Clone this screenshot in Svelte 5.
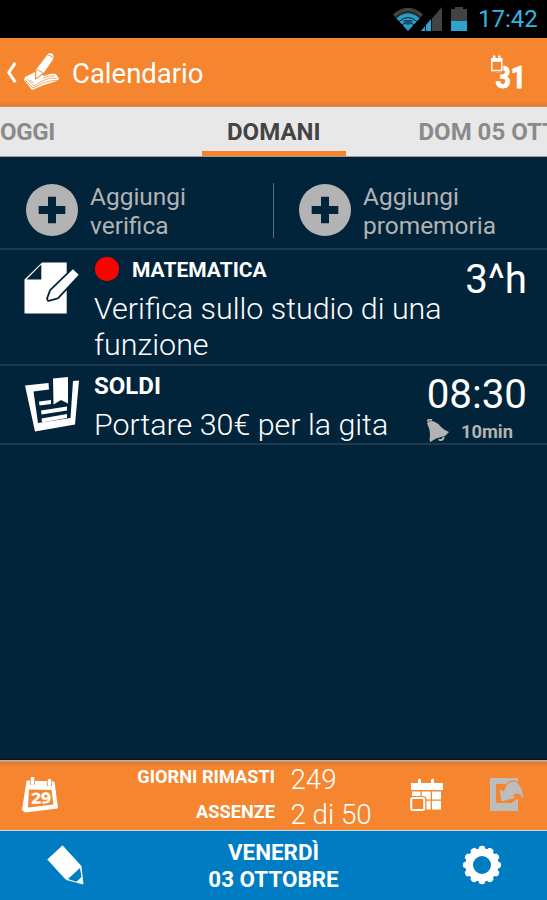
<script>
  const tabs = [
    { label: 'OGGI', cls: 'left' },
    { label: 'DOMANI', cls: 'active' },
    { label: 'DOM 05 OTT', cls: 'right' }
  ];
  const actions = [
    ['Aggiungi', 'verifica'],
    ['Aggiungi', 'promemoria']
  ];
  const teeth = Array.from({ length: 12 }, (_, i) => i * 30);
</script>

<div class="screen">
  <div class="status">
    <svg class="wifi" width="32" height="25" viewBox="0 0 32 25">
      <path d="M1 7.500Q16-6 31 7.500L16 24Z" fill="#434343" />
      <path d="M4.500 11.500Q16 1.500 27.500 11.500L16 24Z" fill="#2c9bc5" />
      <g fill="none" stroke="#071923" stroke-width="1">
        <path d="M3.500 10.500Q16-1 28.500 10.500M7 14.500Q16 6.500 25 14.500M10 18Q16 12.500 22 18" />
      </g>
      <path d="M11 13h10l-3 4.500h-4z" fill="#14506c" />
    </svg>
    <svg class="signal" width="21" height="24" viewBox="0 0 21 24">
      <path d="M21 0V24H0Z" fill="#434343" />
      <path d="M10 12V24H0Z" fill="#2fa3cf" />
      <path d="M4.500 16V24M10.500 10V24" stroke="#041018" stroke-width="1" />
    </svg>
    <svg class="battery" width="16" height="24" viewBox="0 0 16 24">
      <path d="M0 2h4V0h8v2h4v12H0z" fill="#434343" />
      <path d="M0 14h16v10H0z" fill="#2fa3cf" />
    </svg>
    <span class="clock">17:42</span>
  </div>

  <header class="topbar">
    <svg class="back" width="11" height="21" viewBox="0 0 11 21">
      <path d="M9.300 .8L2.800 10.500L9.300 20.200" fill="none" stroke="#fff" stroke-width="3" />
    </svg>
    <svg class="diary" width="36" height="38" viewBox="0 0 36 38" overflow="visible">
      <path d="M1 23L13 17L20 22Q26 19 32 20L35 25L33 27L20 31L8 36L0 26Z" fill="#fff" />
      <path d="M3 24.500L10 32L19 26.500Q26 23 33 24.500M1.500 26.500L9 34L19 29Q27 26 34 26.500M6 26l4 3M19 24Q24 21.500 31 22" fill="none" stroke="#f5862f" stroke-width=".7" />
      <path d="M22 2.500Q24-2 28-.5Q30.500 1 29.300 5L20 18.500L12 24L12.500 15Z" fill="#fff" stroke="#f5862f" stroke-width="2" paint-order="stroke" />
      <path d="M23.300 .8Q27 1.500 29.700 4M13 15.500L19 19" fill="none" stroke="#f5862f" stroke-width=".9" />
    </svg>
    <h1>Calendario</h1>
    <svg class="month" width="38" height="36" viewBox="0 0 38 36">
      <text class="num" x="4.500" y="32.500" textLength="30.500" lengthAdjust="spacingAndGlyphs">31</text>
      <path d="M0 3.500h11.500v13H0z" fill="#f5862f" stroke="#f5862f" stroke-width="1.600" />
      <path d="M0 3h2V.5h2.300V3h3V.5H9.500V3h2v13.300H0z" fill="#fff" />
      <path d="M1.500 6.800h8.500v8H1.500z" fill="#f5862f" />
    </svg>
  </header>

  <nav>
    {#each tabs as tab}
      <div class="tab {tab.cls}"><span>{tab.label}</span></div>
    {/each}
  </nav>

  <section class="actions">
    {#each actions as lines}
      <div class="action">
        <svg width="52" height="52" viewBox="0 0 52 52">
          <circle cx="26" cy="26" r="26" fill="#b3b3b3" />
          <path d="M22 12.700h8v9.300h9.300v8H30v9.300h-8V30h-9.300v-8H22z" fill="#02243b" />
        </svg>
        <p>{lines[0]}<br />{lines[1]}</p>
      </div>
    {/each}
  </section>

  <article class="item test">
    <svg class="picto" width="56" height="53" viewBox="0 0 56 53">
      <path d="M18 .5H42.700V51.500H.5V17.500Z" fill="#fff" />
      <path d="M17.300 2.500V17.500H2.500Z" fill="#02243b" />
      <path d="M49 7.300L54.700 12.700L33.500 35.500L24.500 38L24 36.500L27 28.500Z" fill="#fff" stroke="#02243b" stroke-width="3.600" paint-order="stroke" stroke-linejoin="round" />
    </svg>
    <div class="body">
      <h2><i class="dot"></i>MATEMATICA</h2>
      <p>Verifica sullo studio di una<br />funzione</p>
    </div>
    <div class="when"><strong>3^h</strong></div>
  </article>

  <article class="item memo">
    <svg class="picto" width="56" height="55" viewBox="0 0 56 55">
      <path d="M1 8.500L24.500 6L25 12.500L9.500 14.500L14 46L46.500 41L49 4L55 3.500L51 47.500L11 54.500Z" fill="#fff" />
      <path d="M29 1.500L44 0V26.500L37 23L29.500 27.500Z" fill="#fff" />
      <path d="M15 24.500L27 23V27L15.500 28.500ZM17 33.500L43 29.500V33.500L17.500 37.500ZM17.500 41.500L43 37V41L18 45.500Z" fill="#fff" />
    </svg>
    <div class="body">
      <h2>SOLDI</h2>
      <p>Portare 30€ per la gita</p>
    </div>
    <div class="when">
      <strong>08:30</strong>
      <small>
        <svg width="23" height="24" viewBox="0 0 23 24">
          <path d="M0 4Q3 1 7 2.500Q11 4 14 8Q17 11 22 13L18 17Q8 19 3.500 23Q2 22 3 17Q3 10 1 7Z" fill="#b3b3b3" />
          <path d="M.5 2.500Q2-.5 5 1M11.500 20.500Q15 22.500 17 18" fill="none" stroke="#b3b3b3" stroke-width="2" />
        </svg>
        <span>10min</span>
      </small>
    </div>
  </article>

  <div class="space"></div>

  <section class="stats">
    <svg class="day" width="36" height="36" viewBox="0 0 36 36">
      <path d="M5 4L32 5L35.500 31L3 35L.5 33Z" fill="#fff" stroke="#fff" stroke-width="1" stroke-linejoin="round" />
      <path d="M7 12.500L29.500 13L31.500 27.500L6 30.500Z" fill="#f5862f" />
      <path d="M8 0h5v7.500H8zM25 2h5v7h-5z" fill="#f5862f" />
      <path d="M10.500 1.500V6M27.500 3.500V7.500" stroke="#fff" stroke-width="3.600" stroke-linecap="round" />
      <text class="daynum" x="9" y="26.500" transform="rotate(-2 18 20)" textLength="20" lengthAdjust="spacingAndGlyphs">29</text>
    </svg>
    <div class="labels"><span>GIORNI RIMASTI</span><span>ASSENZE</span></div>
    <div class="values"><span>249</span><span>2 di 50</span></div>
    <svg class="grid" width="34" height="34" viewBox="0 0 34 34">
      <path d="M1 5H8V2Q9.500-1 11 2V5H21V2Q22.500-1 24 2V5H33V12H1Z" fill="#fff" />
      <path d="M2 13.500h8.500v5H2zM11.700 13.500h9v8h-9zM22 13.500h9v8h-9zM12 22.700h8.700v8.700H12zM22 22.700h9v8.700h-9z" fill="#fff" />
      <rect x="1.500" y="20" width="13" height="12" rx="1.500" fill="#f5862f" stroke="#f5862f" stroke-width="4" />
      <rect x="1.200" y="20" width="13" height="12" rx="1.500" fill="#f5862f" stroke="#fff" stroke-width="2" />
    </svg>
    <svg class="export" width="34" height="33" viewBox="0 0 34 33">
      <path d="M0 0H28V6H6V25H22L28 20V33H0Z" fill="#bdbdbd" />
      <path d="M11.500 23.500L9.500 11.500L14 13.500Q17 3.500 23.500 3.500Q32 4.500 33.300 21Q28 11.500 22.500 17.500L25.500 19.500Z" fill="#bdbdbd" stroke="#f5862f" stroke-width="2.400" paint-order="stroke" />
    </svg>
  </section>

  <footer>
    <svg class="pencil" width="38" height="41" viewBox="0 0 38 41">
      <path d="M15.500 .8L34 21L36 39L19 34.500L.7 14.500Z" fill="#fff" stroke="#fff" stroke-width=".8" stroke-linejoin="round" />
      <path d="M33 23L34.500 32L29.500 36.800L21 34Z" fill="#007cc3" />
    </svg>
    <p>VENERDÌ<br />03 OTTOBRE</p>
    <svg class="gear" width="40" height="40" viewBox="-20 -20 40 40">
      <circle r="12.800" fill="none" stroke="#fff" stroke-width="7.600" />
      {#each teeth as a}
        <path transform="rotate({a})" d="M-3.800-15L-2.600-18.500Q0-20 2.600-18.500L3.800-15Z" fill="#fff" />
      {/each}
    </svg>
  </footer>
</div>

<style>
  :global(body) { background: #02243b; }
  .screen {
    width: 547px; height: 900px; overflow: hidden; display: flex; flex-direction: column;
    background: #02243b; color: #fff; font-family: Roboto, sans-serif;
  }
  svg { display: block; flex: none; }
  h1, h2, p { margin: 0; font-weight: 400; }
  .status { height: 38px; flex: none; background: #000; display: flex; align-items: flex-start; padding-top: 7px; box-sizing: border-box; }
  .wifi { margin-left: 392px; }
  .signal { margin-left: -3px; }
  .battery { margin-left: 9px; }
  .clock { margin-left: 11px; font-size: 24px; line-height: 25px; color: #33b5e5; white-space: nowrap; }
  .topbar {
    height: 69px; flex: none; box-sizing: border-box; display: flex; align-items: center;
    background: linear-gradient(#f5862f 63px, #dd7a32 68px, #d6a079 69px);
  }
  .back { margin-left: 6px; }
  .diary { margin-left: 7px; }
  h1 { margin-left: 12px; padding-top: 3px; font-size: 27.500px; line-height: 34px; width: 418px; }
  .month { margin-top: 1px; margin-left: .5px; }
  .num { font: 700 32px Roboto, sans-serif; fill: #fff; stroke: #fff; stroke-width: 1px; stroke-linejoin: round; }
  nav {
    height: 50px; flex: none; box-sizing: border-box; display: grid; grid-template-columns: 202px 143.500px 201.500px;
    background: #e8e8e8; border-bottom: 1px solid #9b9a97; font-size: 24px; font-weight: 700; color: #8a8a8a;
    line-height: 50px; white-space: nowrap; overflow: hidden;
  }
  .active { box-sizing: border-box; height: 49px; text-align: center; color: #444; border-bottom: 5px solid #f5862f; }
  .left { letter-spacing: -.3px; }
  .right { padding-left: 73px; }
  .actions { height: 91px; flex: none; display: grid; grid-template-columns: 273px 1fr; }
  .action { display: flex; padding: 27px 0 0 25.500px; }
  .action + .action { background: linear-gradient(#5d6d79, #5d6d79) 0 26px / 1px 55px no-repeat; }
  .action p { margin: -1px 0 0 12.500px; font-size: 24.450px; line-height: 28.700px; color: #b3b3b3; }
  .item { flex: none; box-sizing: border-box; border-top: 2px solid #1c3b50; display: flex; }
  .picto { margin-left: 24px; }
  .body { margin-left: 14px; flex: 1; white-space: nowrap; }
  .body p { font-size: 30.400px; font-weight: 300; line-height: 36px; }
  .when { width: 105px; padding-right: 20px; text-align: right; }
  .when strong { display: block; font-weight: 400; font-size: 40.300px; line-height: 40px; }
  h2 { display: flex; align-items: center; font-weight: 700; }
  .test { height: 116px; }
  .test .picto { margin-top: 12px; }
  .test h2 { margin-top: 8px; font-size: 21px; line-height: 24px; }
  .dot { width: 23.500px; height: 23.500px; border-radius: 50%; background: #f00; margin: -2px 13.500px 0 1px; }
  .test p { margin-top: 9px; }
  .test .when { padding-top: 10px; }
  .memo { height: 81px; border-bottom: 2px solid #1c3b50; }
  .memo .picto { margin-top: 11px; }
  .memo h2 { margin-top: 6px; font-size: 24px; line-height: 28px; }
  .memo p { margin-top: 7px; }
  .memo .when { padding-top: 9px; }
  small { display: flex; align-items: center; margin: 2px 0 0 5px; font-size: 18.300px; font-weight: 700; color: #b3b3b3; line-height: 24px; }
  small span { margin: 3px 0 0 11px; }
  .space { flex: 1; }
  .stats {
    height: 71px; flex: none; box-sizing: border-box; display: flex; border-top: 1px solid #0a0c28;
    background: linear-gradient(#c9b2a5 1px, #d97932 2px, #f5862f 7px);
  }
  .day { margin: 17px 0 0 22px; }
  .daynum { font: 700 15px "Open Sans", sans-serif; fill: #fff; stroke: #fff; stroke-width: .3px; }
  .labels, .values { display: flex; flex-direction: column; line-height: 35px; white-space: nowrap; }
  .labels { width: 217px; text-align: right; font-size: 18.200px; font-weight: 700; margin-top: -1px; }
  .values { margin: 2px 0 0 15.500px; width: 119.500px; font-size: 27.700px; font-weight: 300; }
  .grid { margin-top: 18px; }
  .export { margin: 18px 0 0 46px; }
  footer {
    height: 70px; flex: none; box-sizing: border-box; display: flex;
    background: linear-gradient(#c7dce8 1px, #007cc3 1px);
  }
  .pencil { margin: 15px 0 0 47px; }
  footer p { width: 200px; margin: 9px 0 0 88.500px; text-align: center; font-size: 22.400px; line-height: 26.700px; font-weight: 700; }
  .gear { margin: 15px 0 0 88.500px; }
</style>
